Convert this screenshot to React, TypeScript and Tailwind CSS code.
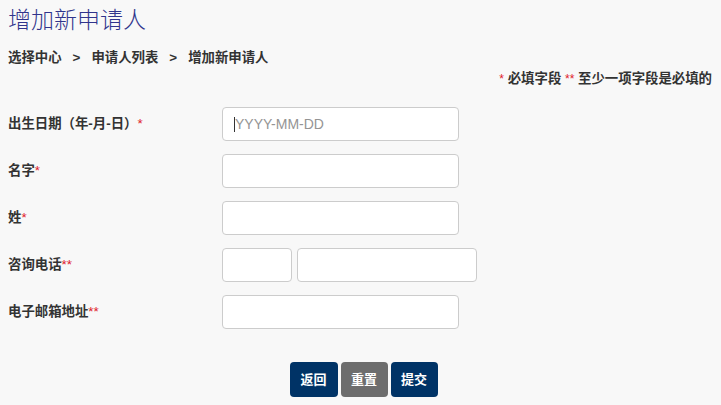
import React from "react";

const cjk = { fontFamily: '"Liberation Sans", "Noto Sans CJK SC", sans-serif' };

function Row({ label, stars, children }: { label: string; stars: string; children: React.ReactNode }) {
  return (
    <div className="flex items-center h-[34px] mb-[13px]">
      <div className="w-[214px] shrink-0 text-[13.4px] font-bold text-[#333]">
        {label}
        <span className="text-[#e0202a] font-normal">{stars}</span>
      </div>
      {children}
    </div>
  );
}

const inputCls =
  "h-[34px] bg-white border border-[#cccccc] rounded-[4px] px-3 text-[14px] outline-none";

export default function App() {
  return (
    <div className="w-[721px] h-[405px] bg-[#f8f8f8] overflow-hidden relative" style={cjk}>
      <div className="px-[8px]">
        <h1 className="pt-[5px] text-[23px] leading-[30px] font-light text-[#30348c]">增加新申请人</h1>
        <div className="mt-[14px] text-[13.4px] font-bold text-[#333] leading-[18px] flex">
          <span>选择中心</span>
          <span className="mx-[11px]">&gt;</span>
          <span>申请人列表</span>
          <span className="mx-[11px]">&gt;</span>
          <span>增加新申请人</span>
        </div>
        <div className="text-right pr-[1px] text-[13.4px] font-bold text-[#333] leading-[18px] mt-[3px]">
          <span className="text-[#e0202a] font-normal align-top text-[12px]">*</span> 必填字段{" "}
          <span className="text-[#e0202a] font-normal align-top text-[12px]">**</span> 至少一项字段是必填的
        </div>
        <div className="mt-[19px]">
          <Row label="出生日期（年-月-日）" stars="*">
            <div className="relative">
              <input className={`${inputCls} w-[237px] placeholder:text-[#949494]`} placeholder="YYYY-MM-DD" style={{ fontFamily: '"Liberation Sans", sans-serif' }} />
              <span className="absolute left-[12px] top-[10px] w-[1px] h-[15px] bg-[#333]" />
            </div>
          </Row>
          <Row label="名字" stars="*">
            <input className={`${inputCls} w-[237px]`} />
          </Row>
          <Row label="姓" stars="*">
            <input className={`${inputCls} w-[237px]`} />
          </Row>
          <Row label="咨询电话" stars="**">
            <input className={`${inputCls} w-[70px]`} />
            <input className={`${inputCls} w-[180px] ml-[5px]`} />
          </Row>
          <Row label="电子邮箱地址" stars="**">
            <input className={`${inputCls} w-[237px]`} />
          </Row>
        </div>
        <div className="flex justify-center gap-[3px] mt-[33px] pl-[6px]">
          <button className="w-[48px] h-[35px] rounded-[4px] bg-[#003366] text-white text-[13px] font-bold">返回</button>
          <button className="w-[47px] h-[35px] rounded-[4px] bg-[#6d6d6d] text-white text-[13px] font-bold">重置</button>
          <button className="w-[47px] h-[35px] rounded-[4px] bg-[#003366] text-white text-[13px] font-bold">提交</button>
        </div>
      </div>
    </div>
  );
}
